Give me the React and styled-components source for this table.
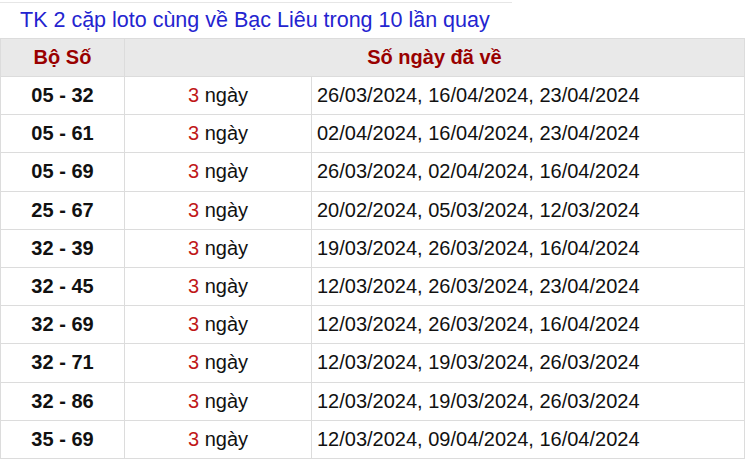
import React from "react";
import styled, { createGlobalStyle } from "styled-components";

const GlobalStyle = createGlobalStyle`
  body {
    margin: 0;
    background: #fff;
    font-family: Arial, "Liberation Sans", sans-serif;
  }
`;

const Wrapper = styled.div`
  width: 745px;
`;

const Title = styled.h2`
  width: 492px;
  margin: 2px 0 0;
  padding: 5px 0 6px 20px;
  border-top: 1px solid #e6e6e6;
  font-size: 21.5px;
  font-weight: 400;
  line-height: 24px;
  color: #2424d0;
`;

const Table = styled.table`
  width: 745px;
  border-collapse: collapse;
  font-size: 20px;
  color: #111;
`;

const HeadCell = styled.th`
  height: 37px;
  padding: 0;
  background: #e9e9e9;
  border: 1px solid #dcdcdc;
  color: #990000;
  font-weight: 700;
  text-align: center;
`;

const Cell = styled.td`
  height: 37.2px;
  padding: ${(p) => (p.$left ? "0 0 0 5px" : "0")};
  border: 1px solid #dcdcdc;
  text-align: ${(p) => (p.$left ? "left" : "center")};
  font-weight: ${(p) => (p.$bold ? 700 : 400)};
  width: ${(p) => p.$w || "auto"};
`;

const Count = styled.span`
  color: #c01818;
`;

const rows = [
  ["05 - 32", "26/03/2024, 16/04/2024, 23/04/2024"],
  ["05 - 61", "02/04/2024, 16/04/2024, 23/04/2024"],
  ["05 - 69", "26/03/2024, 02/04/2024, 16/04/2024"],
  ["25 - 67", "20/02/2024, 05/03/2024, 12/03/2024"],
  ["32 - 39", "19/03/2024, 26/03/2024, 16/04/2024"],
  ["32 - 45", "12/03/2024, 26/03/2024, 23/04/2024"],
  ["32 - 69", "12/03/2024, 26/03/2024, 16/04/2024"],
  ["32 - 71", "12/03/2024, 19/03/2024, 26/03/2024"],
  ["32 - 86", "12/03/2024, 19/03/2024, 26/03/2024"],
  ["35 - 69", "12/03/2024, 09/04/2024, 16/04/2024"],
];

export default function App() {
  return (
    <Wrapper>
      <GlobalStyle />
      <Title>TK 2 cặp loto cùng về Bạc Liêu trong 10 lần quay</Title>
      <Table>
        <thead>
          <tr>
            <HeadCell style={{ width: 123 }}>Bộ Số</HeadCell>
            <HeadCell colSpan={2}>Số ngày đã về</HeadCell>
          </tr>
        </thead>
        <tbody>
          {rows.map(([pair, dates]) => (
            <tr key={pair}>
              <Cell $bold $w="123px">{pair}</Cell>
              <Cell $w="186px">
                <Count>3</Count> ngày
              </Cell>
              <Cell $left>{dates}</Cell>
            </tr>
          ))}
        </tbody>
      </Table>
    </Wrapper>
  );
}
